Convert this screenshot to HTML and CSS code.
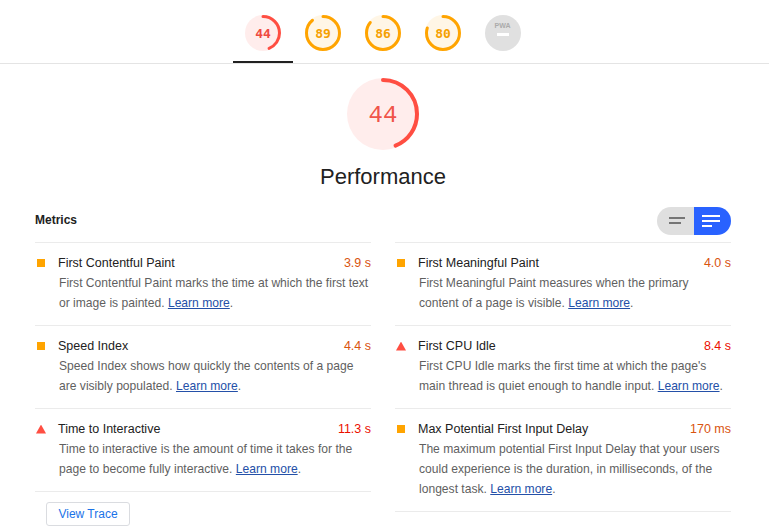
FILE: index.html
```html
<!DOCTYPE html>
<html lang="en">
<head>
    <meta charset="UTF-8">
    <meta name="viewport" content="width=device-width, initial-scale=1.0">
    <title>Lighthouse Report</title>
    <link rel="stylesheet" href="styles.css">
</head>
<body>
    <nav class="tabs">
        <a class="tab tab-active">
            <svg class="gauge gauge-fail" viewBox="0 0 36 36">
                <circle class="gauge-base" cx="18" cy="18" r="18"/>
                <circle class="gauge-arc" cx="18" cy="18" r="16.5" pathLength="100" stroke-dasharray="44 100" transform="rotate(-90 18 18)"/>
                <text class="gauge-value" x="18" y="18.5">44</text>
            </svg>
        </a>
        <a class="tab">
            <svg class="gauge gauge-average" viewBox="0 0 36 36">
                <circle class="gauge-base" cx="18" cy="18" r="18"/>
                <circle class="gauge-arc" cx="18" cy="18" r="16.5" pathLength="100" stroke-dasharray="89 100" transform="rotate(-90 18 18)"/>
                <text class="gauge-value" x="18" y="18.5">89</text>
            </svg>
        </a>
        <a class="tab">
            <svg class="gauge gauge-average" viewBox="0 0 36 36">
                <circle class="gauge-base" cx="18" cy="18" r="18"/>
                <circle class="gauge-arc" cx="18" cy="18" r="16.5" pathLength="100" stroke-dasharray="86 100" transform="rotate(-90 18 18)"/>
                <text class="gauge-value" x="18" y="18.5">86</text>
            </svg>
        </a>
        <a class="tab">
            <svg class="gauge gauge-average" viewBox="0 0 36 36">
                <circle class="gauge-base" cx="18" cy="18" r="18"/>
                <circle class="gauge-arc" cx="18" cy="18" r="16.5" pathLength="100" stroke-dasharray="80 100" transform="rotate(-90 18 18)"/>
                <text class="gauge-value" x="18" y="18.5">80</text>
            </svg>
        </a>
        <a class="tab">
            <svg class="gauge gauge-pwa" viewBox="0 0 36 36">
                <circle class="pwa-base" cx="18" cy="18" r="18"/>
                <text class="pwa-label" x="17.5" y="12.5">PWA</text>
                <rect class="pwa-dash" x="12" y="18" width="12" height="3"/>
            </svg>
        </a>
    </nav>

    <main class="report">
        <section class="category">
            <svg class="gauge-big gauge-fail" viewBox="0 0 72 72">
                <circle class="gauge-base" cx="36" cy="36" r="36"/>
                <circle class="gauge-arc" cx="36" cy="36" r="34" pathLength="100" stroke-dasharray="44 100" transform="rotate(-90 36 36)"/>
                <text class="gauge-big-value" x="36" y="37">44</text>
            </svg>
            <h1 class="category-title">Performance</h1>
        </section>

        <section class="metrics">
            <div class="metrics-header">
                <h2 class="metrics-title">Metrics</h2>
                <div class="toggle">
                    <span class="toggle-half toggle-off">
                        <svg width="18" height="8" viewBox="0 0 18 8"><rect x="0" y="0" width="16" height="2"/><rect x="0" y="5" width="12" height="2"/></svg>
                    </span>
                    <span class="toggle-half toggle-on">
                        <svg width="18" height="12" viewBox="0 0 18 12"><rect x="0" y="0" width="18" height="2"/><rect x="0" y="5" width="18" height="2"/><rect x="0" y="10" width="10" height="2"/></svg>
                    </span>
                </div>
            </div>

            <div class="columns">
                <div class="column">
                    <div class="metric metric-average">
                        <div class="metric-row">
                            <span class="metric-icon"></span>
                            <span class="metric-name">First Contentful Paint</span>
                            <span class="metric-value">3.9 s</span>
                        </div>
                        <p class="metric-desc">First Contentful Paint marks the time at which the first text or image is painted. <a href="#">Learn more</a>.</p>
                    </div>
                    <div class="metric metric-average">
                        <div class="metric-row">
                            <span class="metric-icon"></span>
                            <span class="metric-name">Speed Index</span>
                            <span class="metric-value">4.4 s</span>
                        </div>
                        <p class="metric-desc">Speed Index shows how quickly the contents of a page are visibly populated. <a href="#">Learn more</a>.</p>
                    </div>
                    <div class="metric metric-fail">
                        <div class="metric-row">
                            <span class="metric-icon"></span>
                            <span class="metric-name">Time to Interactive</span>
                            <span class="metric-value">11.3 s</span>
                        </div>
                        <p class="metric-desc">Time to interactive is the amount of time it takes for the page to become fully interactive. <a href="#">Learn more</a>.</p>
                    </div>
                    <div class="column-end">
                        <button class="trace-button">View Trace</button>
                    </div>
                </div>

                <div class="column">
                    <div class="metric metric-average">
                        <div class="metric-row">
                            <span class="metric-icon"></span>
                            <span class="metric-name">First Meaningful Paint</span>
                            <span class="metric-value">4.0 s</span>
                        </div>
                        <p class="metric-desc">First Meaningful Paint measures when the primary content of a page is visible. <a href="#">Learn more</a>.</p>
                    </div>
                    <div class="metric metric-fail">
                        <div class="metric-row">
                            <span class="metric-icon"></span>
                            <span class="metric-name">First CPU Idle</span>
                            <span class="metric-value">8.4 s</span>
                        </div>
                        <p class="metric-desc">First CPU Idle marks the first time at which the page's main thread is quiet enough to handle input. <a href="#">Learn more</a>.</p>
                    </div>
                    <div class="metric metric-average">
                        <div class="metric-row">
                            <span class="metric-icon"></span>
                            <span class="metric-name">Max Potential First Input Delay</span>
                            <span class="metric-value">170 ms</span>
                        </div>
                        <p class="metric-desc">The maximum potential First Input Delay that your users could experience is the duration, in milliseconds, of the longest task. <a href="#">Learn more</a>.</p>
                    </div>
                    <div class="column-end"></div>
                </div>
            </div>
        </section>
    </main>
</body>
</html>
```

FILE: styles.css
```css
body {
    margin: 0;
    font-family: "Liberation Sans", Arial, sans-serif;
    color: #212121;
    background: #fff;
    overflow: hidden;
}

/* top score tabs */
.tabs {
    display: flex;
    justify-content: center;
    border-bottom: 1px solid #e4e4e4;
    padding-right: 3px;
}
.tab {
    display: flex;
    justify-content: center;
    width: 60px;
    padding: 15px 0 10px;
    border-bottom: 2px solid transparent;
}
.tab-active {
    border-bottom-color: #212121;
}
.gauge {
    width: 36px;
    height: 36px;
    display: block;
}
.gauge-fail .gauge-base {
    fill: #ffedec;
}
.gauge-fail .gauge-arc {
    stroke: #ff4e42;
}
.gauge-average .gauge-base {
    fill: #fff6e6;
}
.gauge-average .gauge-arc {
    stroke: #ffa400;
}
.gauge-arc {
    fill: none;
    stroke-width: 3;
    stroke-linecap: round;
}
.gauge-value {
    font-family: "DejaVu Sans Mono", monospace;
    font-weight: bold;
    font-size: 13px;
    text-anchor: middle;
    dominant-baseline: central;
}
.gauge-fail .gauge-value {
    fill: #ef4a40;
}
.gauge-average .gauge-value {
    fill: #f5a000;
}
.pwa-base {
    fill: #e0e0e0;
}
.pwa-label {
    font-family: "Liberation Sans", Arial, sans-serif;
    font-size: 7px;
    font-weight: bold;
    fill: #ababab;
    text-anchor: middle;
}
.pwa-dash {
    fill: #fff;
}

/* category summary */
.report {
    width: 696px;
    margin-left: 35px;
}
.category {
    display: flex;
    flex-direction: column;
    align-items: center;
    padding-top: 14px;
}
.gauge-big {
    width: 72px;
    height: 72px;
    display: block;
}
.gauge-big .gauge-arc {
    stroke-width: 4;
}
.gauge-big-value {
    font-family: "Liberation Mono", monospace;
    font-size: 24px;
    fill: #f0544a;
    text-anchor: middle;
    dominant-baseline: central;
}
.category-title {
    margin: 13px 0 0;
    font-size: 22px;
    font-weight: normal;
    line-height: 28px;
    color: #212121;
}

/* metrics */
.metrics-header {
    display: flex;
    justify-content: space-between;
    align-items: center;
    margin-top: 16px;
    margin-bottom: 7px;
}
.metrics-title {
    margin: 0;
    font-size: 12px;
    font-weight: bold;
    padding-bottom: 2px;
}
.toggle {
    display: flex;
    height: 28px;
    border-radius: 14px;
    overflow: hidden;
}
.toggle-half {
    display: flex;
    align-items: center;
    width: 37px;
}
.toggle-off {
    background: #dfdfdf;
    padding-left: 12px;
    box-sizing: border-box;
}
.toggle-off svg {
    fill: #757575;
}
.toggle-on {
    background: #2962ff;
    padding-left: 8px;
    box-sizing: border-box;
}
.toggle-on svg {
    fill: #fff;
}

.columns {
    display: flex;
    gap: 24px;
    align-items: flex-start;
}
.column {
    flex: 1;
}
.metric {
    border-top: 1px solid #ebebeb;
    padding: 10px 0 12px;
}
.column-end {
    border-top: 1px solid #ebebeb;
}
.metric-row {
    display: flex;
    align-items: center;
    height: 20px;
}
.metric-icon {
    width: 10px;
    height: 9px;
    margin-left: 1px;
    margin-right: 12px;
    flex-shrink: 0;
}
.metric-average .metric-icon {
    width: 8px;
    height: 8px;
    margin-left: 2px;
    margin-right: 13px;
    background: #ffa400;
}
.metric-fail .metric-icon {
    background: #ff4e42;
    clip-path: polygon(50% 0, 100% 100%, 0 100%);
}
.metric-name {
    flex: 1;
    font-size: 12.5px;
    color: #212121;
}
.metric-value {
    font-size: 12.5px;
}
.metric-average .metric-value {
    color: #d9540f;
}
.metric-fail .metric-value {
    color: #eb0f00;
}
.metric-desc {
    margin: 0;
    padding-left: 24px;
    font-size: 12.1px;
    line-height: 20px;
    color: #5f5f5f;
}
.metric-desc a {
    color: #2450a8;
}

.trace-button {
    margin: 10px 0 0 11px;
    height: 24px;
    width: 84px;
    padding: 0;
    background: #fff;
    border: 1px solid #dadce0;
    border-radius: 3px;
    font-family: "Liberation Sans", Arial, sans-serif;
    font-size: 12px;
    color: #1a73e8;
}
```
